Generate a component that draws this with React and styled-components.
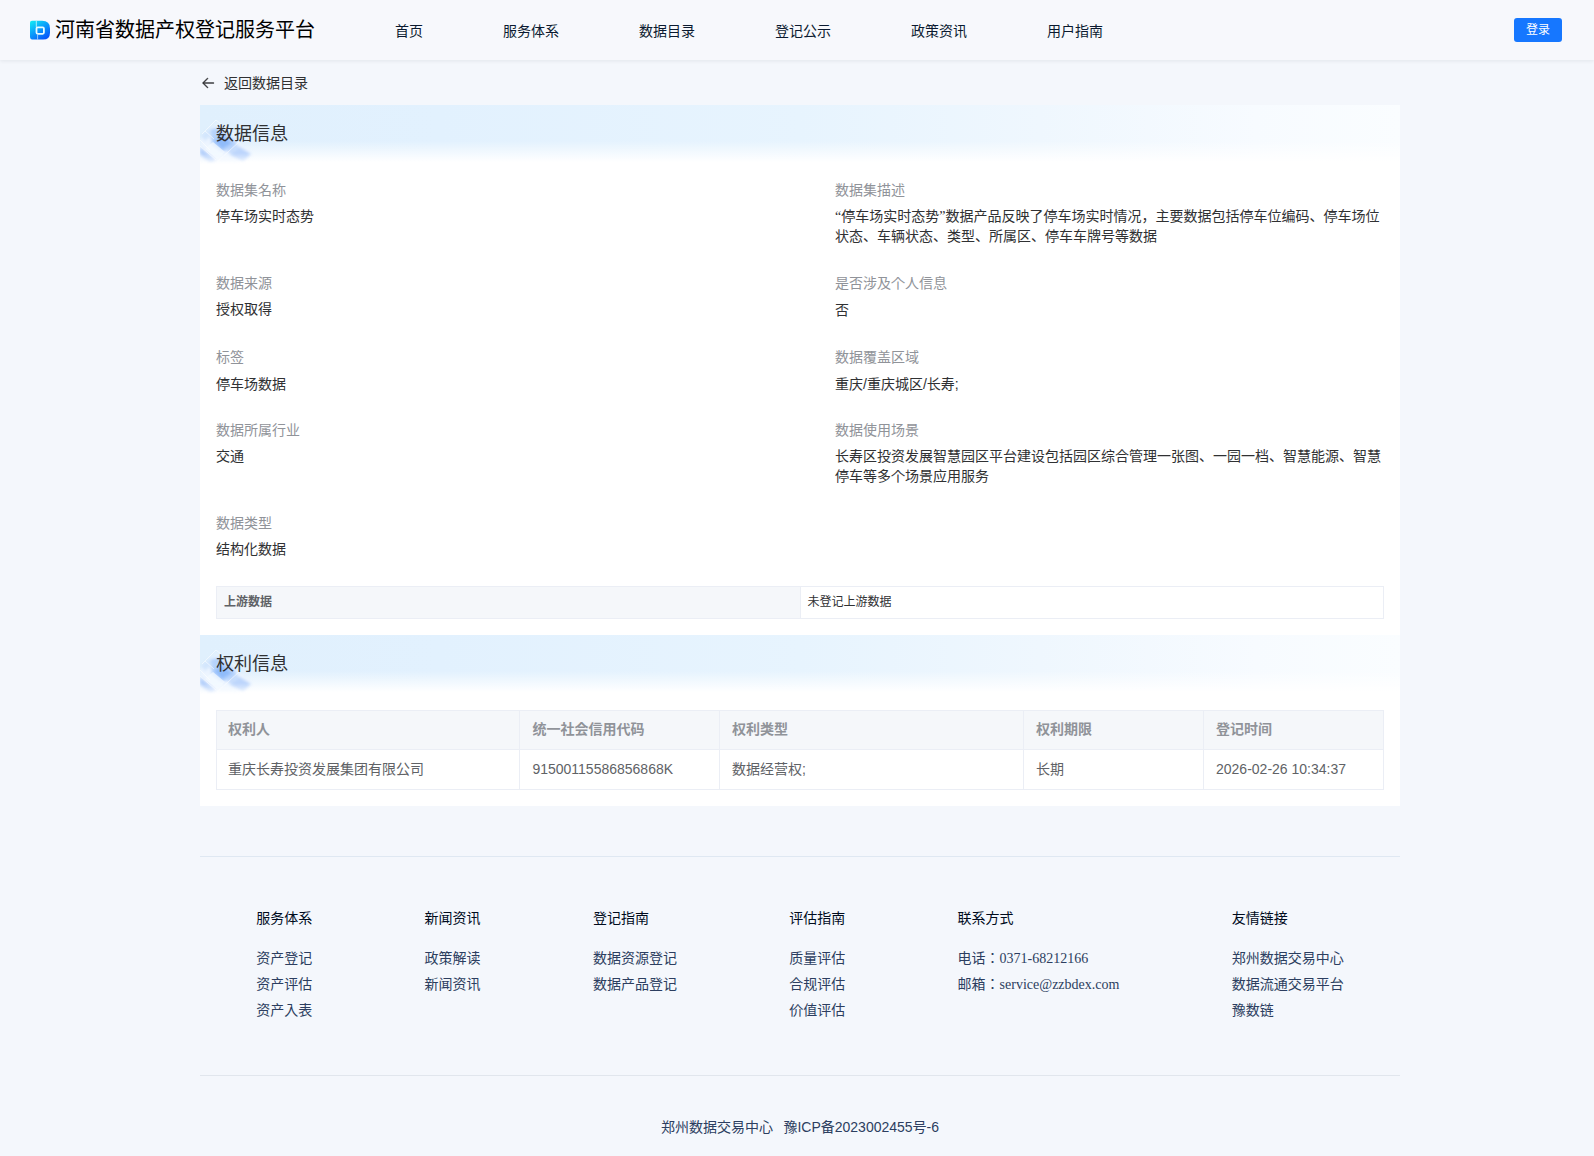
import React from 'react'
import styled, { createGlobalStyle } from 'styled-components'

const sans = '"Liberation Sans", "Noto Sans CJK JP", sans-serif'
const serif = '"Liberation Serif", "Noto Sans CJK JP", serif'

const navItems = ['首页', '服务体系', '数据目录', '登记公示', '政策资讯', '用户指南']

const rows = [
	{
		height: 93,
		left: { label: '数据集名称', value: '停车场实时态势', serif: true },
		right: {
			label: '数据集描述',
			value: '“停车场实时态势”数据产品反映了停车场实时情况，主要数据包括停车位编码、停车场位状态、车辆状态、类型、所属区、停车车牌号等数据',
			serif: true
		}
	},
	{
		height: 74,
		left: { label: '数据来源', value: '授权取得', serif: true },
		right: { label: '是否涉及个人信息', value: '否' }
	},
	{
		height: 73,
		left: { label: '标签', value: '停车场数据' },
		right: { label: '数据覆盖区域', value: '重庆/重庆城区/长寿;' }
	},
	{
		height: 93,
		left: { label: '数据所属行业', value: '交通', serif: true },
		right: {
			label: '数据使用场景',
			value: '长寿区投资发展智慧园区平台建设包括园区综合管理一张图、一园一档、智慧能源、智慧停车等多个场景应用服务',
			serif: true
		}
	},
	{
		height: 73,
		left: { label: '数据类型', value: '结构化数据', serif: true }
	}
]

const rights = {
	heads: ['权利人', '统一社会信用代码', '权利类型', '权利期限', '登记时间'],
	cells: ['重庆长寿投资发展集团有限公司', '91500115586856868K', '数据经营权;', '长期', '2026-02-26 10:34:37']
}

const footerColumns = [
	{ title: '服务体系', links: ['资产登记', '资产评估', '资产入表'] },
	{ title: '新闻资讯', links: ['政策解读', '新闻资讯'] },
	{ title: '登记指南', links: ['数据资源登记', '数据产品登记'] },
	{ title: '评估指南', links: ['质量评估', '合规评估', '价值评估'] },
	{ title: '联系方式', links: ['电话：0371-68212166', '邮箱：service@zzbdex.com'] },
	{ title: '友情链接', links: ['郑州数据交易中心', '数据流通交易平台', '豫数链'] }
]

const LogoIcon = () => (
	<svg width="20" height="20" viewBox="0 0 20 20">
		<defs>
			<linearGradient id="logo" x1="0" y1="0" x2="0.7" y2="1">
				<stop offset="0" stopColor="#12f0f4" />
				<stop offset="0.5" stopColor="#0aa0fa" />
				<stop offset="1" stopColor="#0657fb" />
			</linearGradient>
		</defs>
		<path d="M2 .8H12Q20 .8 20 8.4V12.4Q20 19.6 13 19.6H3.4Q0 19.6 0 16.4V2.8Q0 .8 2 .8Z" fill="url(#logo)" />
		<path d="M6.3 .8V7.4" fill="none" stroke="#bff6fd" strokeWidth="0.9" />
		<rect x="6.5" y="7.4" width="7.4" height="6.4" rx="1.2" fill="none" stroke="#e6fbff" strokeWidth="1.8" />
		<path d="M7.6 14.5V19.6" stroke="#b5d8ff" strokeWidth="0.8" />
	</svg>
)

const BackIcon = () => (
	<svg width="16" height="16" viewBox="0 0 1024 1024" fill="#303133" stroke="#303133" strokeWidth="26">
		<path d="M224 480h640a32 32 0 1 1 0 64H224a32 32 0 0 1 0-64z" />
		<path d="m237.248 512 265.408 265.344a32 32 0 0 1-45.312 45.312l-288-288a32 32 0 0 1 0-45.312l288-288a32 32 0 1 1 45.312 45.312L237.248 512z" />
	</svg>
)

// Tilted blocks behind the left end of a section title
const Ornament = () => (
	<OrnamentSvg width="64" height="60" viewBox="0 0 64 60">
		<defs>
			<filter id="soft" x="-20%" y="-20%" width="140%" height="140%">
				<feGaussianBlur stdDeviation="1.5" />
			</filter>
			<linearGradient id="fall" x1="0" y1="0" x2="0" y2="1">
				<stop offset="0.8" stopColor="#fff" />
				<stop offset="1" stopColor="#000" />
			</linearGradient>
			<mask id="fade">
				<rect width="64" height="60" fill="url(#fall)" />
			</mask>
		</defs>
		<g mask="url(#fade)">
			<g filter="url(#soft)">
				<path d="M0 34 L17 19 L50 47 L36 60 H0Z" fill="#eef6ff" opacity="0.85" />
				<path d="M10 25 L18 22 L32 33 L37 38 L31 44 L22 47 L12 40Z" fill="#a6cbfc" opacity="0.8" />
				<path d="M14 36 L22 31 L32 38 L22 44Z" fill="#7db1f9" opacity="0.65" />
				<path d="M30 50 L40 42 L51 49 L43 57Z" fill="#b0cdfb" opacity="0.8" />
				<path d="M0 42 L16 55 L11 59 L0 50Z" fill="#9abffa" opacity="0.7" />
				<path d="M1 31 L8 25 L13 29 L5 36Z" fill="#cde2fd" opacity="0.8" />
				<path d="M27 46 L36 39 L41 43 L31 50Z" fill="#bfd8fc" opacity="0.8" />
			</g>
			<path d="M5 44 L13 37 L25 47 L17 54Z" fill="#f3f9ff" opacity="0.75" />
			<path d="M2 29 L16 15 L36 31 M0 35 L10 45 M17 57 L40 36 M5 26 L14 34 M0 41 L16 55" fill="none" stroke="#fff" strokeWidth="0.9" opacity="0.6" />
		</g>
	</OrnamentSvg>
)

const Field = ({ data }) => (
	<FieldBox>
		<FieldLabel>{data.label}</FieldLabel>
		<FieldValue $serif={data.serif}>{data.value}</FieldValue>
	</FieldBox>
)

const SectionHead = ({ children }) => (
	<Banner>
		<Ornament />
		<BannerTitle>{children}</BannerTitle>
	</Banner>
)

const App = () => (
	<Page>
		<GlobalStyle />
		<Header>
			<Brand>
				<LogoIcon />
				<BrandName>河南省数据产权登记服务平台</BrandName>
			</Brand>
			<Nav>
				{navItems.map(item => <NavItem key={item}>{item}</NavItem>)}
			</Nav>
			<LoginButton>登录</LoginButton>
		</Header>
		<Container>
			<Back>
				<BackIcon />
				<span>返回数据目录</span>
			</Back>
			<Card>
				<SectionHead>数据信息</SectionHead>
				<Fields>
					{rows.map(row => (
						<FieldRow key={row.left.label} $height={row.height}>
							<Field data={row.left} />
							{row.right && <Field data={row.right} />}
						</FieldRow>
					))}
				</Fields>
				<Upstream>
					<UpstreamLabel>上游数据</UpstreamLabel>
					<UpstreamValue>未登记上游数据</UpstreamValue>
				</Upstream>
				<SectionHead>权利信息</SectionHead>
				<Table>
					{rights.heads.map(head => <HeadCell key={head}>{head}</HeadCell>)}
					{rights.cells.map(cell => <Cell key={cell}>{cell}</Cell>)}
				</Table>
			</Card>
			<Footer>
				<FooterColumns>
					{footerColumns.map(column => (
						<FooterColumn key={column.title}>
							<FooterTitle>{column.title}</FooterTitle>
							{column.links.map(link => <FooterLink key={link}>{link}</FooterLink>)}
						</FooterColumn>
					))}
				</FooterColumns>
				<Copyright>
					<span>郑州数据交易中心</span>
					<span>豫ICP备2023002455号-6</span>
				</Copyright>
			</Footer>
		</Container>
	</Page>
)

const GlobalStyle = createGlobalStyle`
	* {
		box-sizing: border-box;
	}
	body {
		margin: 0;
		background: #f4f7fc;
		font-family: ${sans};
	}
`

const Page = styled.div`
	height: 1156px;
	overflow: hidden;
	font-size: 14px;
	color: #303133;
`

const Header = styled.header`
	display: flex;
	height: 60px;
	padding: 0 32px 0 30px;
	background: #f7f8fc;
	box-shadow: 0 1px 4px rgba(0, 21, 41, .08);
`

const Brand = styled.div`
	display: flex;
	align-items: center;
	width: 285px;
	gap: 5px;
`

const BrandName = styled.div`
	font-size: 20px;
	line-height: 28px;
	color: #000;
	white-space: nowrap;
`

const Nav = styled.nav`
	display: flex;
	gap: 80px;
	margin-left: 80px;
`

const NavItem = styled.div`
	line-height: 62px;
	color: #0b1a30;
`

const LoginButton = styled.button`
	width: 48px;
	height: 24px;
	margin: 18px 0 0 auto;
	padding: 0 0 1px;
	border: 0;
	border-radius: 3px;
	background: #1677ff;
	color: #fff;
	font-family: ${sans};
	font-size: 12px;
	line-height: 22px;
`

const Container = styled.main`
	width: 1200px;
	margin-left: 200px;
`

const Back = styled.div`
	display: flex;
	align-items: center;
	gap: 8px;
	height: 45px;
	line-height: 20px;
`

const Card = styled.section`
	height: 701px;
	background: #fff;
`

const Banner = styled.div`
	position: relative;
	height: 60px;
	padding-left: 16px;
	background:
		linear-gradient(180deg, rgba(255, 255, 255, 0) 60%, #fff 95%),
		linear-gradient(90deg, #e0f0fd 0, #e2f1fe 20%, #e7f4fe 50%, #eff7fe 70%, #f7fbff 88%, #fafdff 100%);
`

const OrnamentSvg = styled.svg`
	position: absolute;
	left: 0;
	top: 0;
`

const BannerTitle = styled.div`
	position: relative;
	font-size: 18px;
	line-height: 58px;
`

const Fields = styled.div`
	padding: 15px 16px 0;
`

const FieldRow = styled.div`
	display: grid;
	grid-template-columns: 549px 549px;
	column-gap: 70px;
	height: ${props => props.$height}px;
`

const FieldBox = styled.div`
	line-height: 20px;
`

const FieldLabel = styled.div`
	color: #909399;
`

const FieldValue = styled.div`
	margin-top: 7px;
	font-family: ${props => props.$serif ? serif : sans};
`

const Upstream = styled.div`
	display: grid;
	grid-template-columns: 584px 1fr;
	height: 33px;
	margin: 0 16px 16px;
	border: 1px solid #ebeef5;
	font-size: 12px;
	line-height: 30px;
`

const UpstreamLabel = styled.div`
	padding-left: 7px;
	border-right: 1px solid #ebeef5;
	background: #f5f7fa;
	color: #606266;
	font-weight: 700;
`

const UpstreamValue = styled.div`
	padding-left: 6.5px;
`

const Table = styled.div`
	display: grid;
	grid-template-columns: 303px 200px 304px 180px 180px;
	margin: 15px 16px 0;
	border: 1px solid #ebeef5;
	border-width: 1px 0 0 1px;
`

const Cell = styled.div`
	height: 40px;
	padding-left: 12px;
	border: 1px solid #ebeef5;
	border-width: 0 1px 1px 0;
	color: #606266;
	line-height: 39px;
	white-space: nowrap;

	&:nth-child(5n + 1) {
		padding-left: 11px;
	}

	&:nth-child(5n + 2) {
		padding-left: 12.4px;
	}
`

const HeadCell = styled(Cell)`
	height: 39px;
	line-height: 36px;
	background: #f5f7fa;
	color: #909399;
	font-weight: 700;
`

const Footer = styled.footer`
	margin-top: 50px;
	border-top: 1px solid #dfe8f2;
`

const FooterColumns = styled.div`
	display: flex;
	justify-content: space-around;
	height: 219px;
	padding-top: 52px;
	border-bottom: 1px solid #e1e6ed;
`

const FooterColumn = styled.div`
	font-family: ${serif};
`

const FooterTitle = styled.div`
	margin-bottom: 17px;
	line-height: 20px;
	color: #000b1c;
`

const FooterLink = styled.div`
	line-height: 26px;
	color: #2c3e60;
`

const Copyright = styled.div`
	display: flex;
	justify-content: center;
	gap: 10.5px;
	padding-top: 41px;
	line-height: 20px;
	color: #2c3e60;
`

export default App
